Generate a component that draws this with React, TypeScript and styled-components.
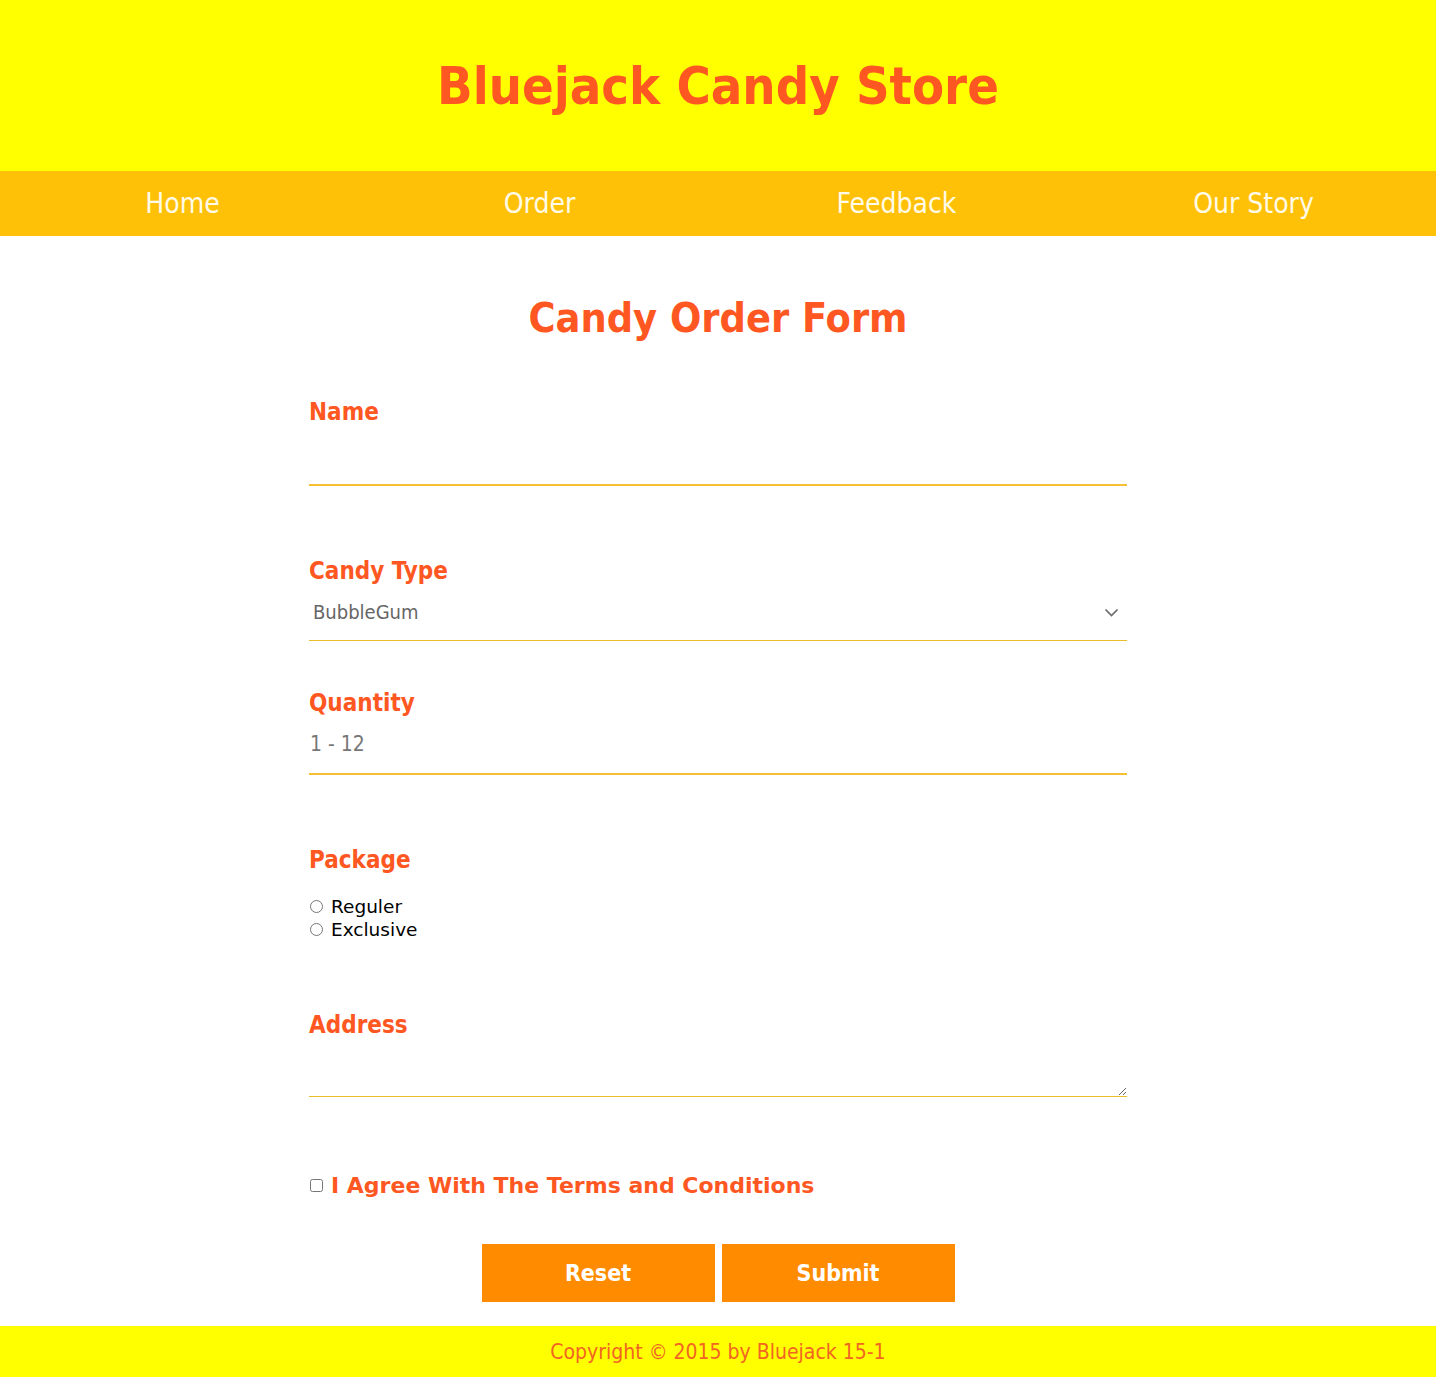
import React from "react";
import styled, { createGlobalStyle } from "styled-components";

const GlobalStyle = createGlobalStyle`
  body {
    margin: 0;
    background: #ffffff;
    font-family: "DejaVu Sans Condensed", "DejaVu Sans", sans-serif;
  }
`;

const tahoma = `"DejaVu Sans Condensed", "DejaVu Sans", sans-serif`;
const verdana = `"DejaVu Sans", Verdana, sans-serif`;
const orangeRed = "#ff5722";
const amber = "#ffc107";
const line = "#f5c133";
const thinLine = "#e9bf2a";

const Header = styled.header`
  height: 171px;
  background: #ffff00;
  display: flex;
  align-items: center;
  justify-content: center;
`;

const StoreTitle = styled.h1`
  margin: 0;
  font-family: ${tahoma};
  font-stretch: condensed;
  font-size: 52px;
  font-weight: bold;
  color: ${orangeRed};
`;

const Nav = styled.nav`
  height: 65px;
  padding: 0 4px;
  background: ${amber};
  display: grid;
  grid-template-columns: repeat(4, 1fr);
  align-items: center;
`;

const NavLink = styled.a`
  text-align: center;
  font-family: ${tahoma};
  font-stretch: condensed;
  font-size: 28px;
  color: #fffbe8;
  text-decoration: none;
  cursor: pointer;
`;

const Main = styled.main`
  padding-top: 57px;
`;

const FormTitle = styled.h2`
  margin: 0;
  text-align: center;
  font-family: ${tahoma};
  font-stretch: condensed;
  font-size: 41px;
  line-height: 50px;
  font-weight: bold;
  color: ${orangeRed};
`;

const Form = styled.form`
  width: 818px;
  margin: 0 auto;
  display: flex;
  flex-direction: column;
`;

const Field = styled.div<{ $gap: number }>`
  margin-top: ${(p) => p.$gap}px;
  display: flex;
  flex-direction: column;
`;

const Label = styled.label`
  font-family: ${tahoma};
  font-stretch: condensed;
  font-size: 24px;
  line-height: 26px;
  font-weight: bold;
  color: ${orangeRed};
`;

const TextInput = styled.input<{ $top: number }>`
  box-sizing: border-box;
  width: 100%;
  height: 47px;
  margin-top: ${(p) => p.$top}px;
  padding: 0 0 14px 1px;
  border: none;
  border-bottom: 2px solid ${line};
  outline: none;
  font-family: ${tahoma};
  font-stretch: condensed;
  font-size: 21px;
  color: #333;
  background: transparent;
  &::placeholder {
    color: #777;
  }
`;

const SelectWrap = styled.div`
  position: relative;
  margin-top: 4px;
  border-bottom: 1px solid ${thinLine};
`;

const Select = styled.select`
  display: block;
  box-sizing: border-box;
  width: 100%;
  height: 52px;
  padding: 0 30px 4px 4px;
  appearance: none;
  border: 0;
  border-radius: 0;
  outline: none;
  font-family: ${tahoma};
  font-stretch: condensed;
  font-size: 20px;
  color: #666;
  background: #ffffff;
`;

const Chevron = styled.svg`
  position: absolute;
  right: 8px;
  top: 20px;
  width: 15px;
  height: 9px;
  pointer-events: none;
`;

const RadioGroup = styled.div`
  margin-top: 22px;
  display: flex;
  flex-direction: column;
`;

const RadioRow = styled.label`
  display: flex;
  align-items: center;
  height: 23px;
  font-family: ${verdana};
  font-size: 18.5px;
  color: #000;
  input {
    margin: 0 8px 0 1px;
    width: 13px;
    height: 13px;
  }
`;

const TextArea = styled.textarea`
  box-sizing: border-box;
  width: 100%;
  height: 51px;
  margin-top: 8px;
  border: none;
  border-bottom: 1px solid ${thinLine};
  outline: none;
  font-family: ${tahoma};
  font-size: 19px;
`;

const AgreeRow = styled.label`
  margin-top: 75px;
  display: flex;
  align-items: center;
  height: 26px;
  font-family: ${verdana};
  font-size: 22px;
  font-weight: bold;
  color: ${orangeRed};
  input {
    margin: 0 8px 0 1px;
    width: 13px;
    height: 13px;
  }
`;

const Buttons = styled.div`
  margin-top: 46px;
  display: flex;
  justify-content: center;
  gap: 7px;
`;

const Button = styled.button`
  width: 233px;
  height: 58px;
  border: none;
  background: #ff8c00;
  color: #ffffff;
  font-family: ${tahoma};
  font-stretch: condensed;
  font-size: 23px;
  font-weight: bold;
  cursor: pointer;
`;

const Footer = styled.footer`
  margin: 24px 0 5px;
  height: 51px;
  background: #ffff00;
  display: flex;
  align-items: center;
  justify-content: center;
  font-family: ${tahoma};
  font-stretch: condensed;
  font-size: 21px;
  color: #f26522;
`;

const navItems = ["Home", "Order", "Feedback", "Our Story"];

export default function App() {
  return (
    <>
      <GlobalStyle />
      <Header>
        <StoreTitle>Bluejack Candy Store</StoreTitle>
      </Header>
      <Nav>
        {navItems.map((n) => (
          <NavLink key={n}>{n}</NavLink>
        ))}
      </Nav>
      <Main>
        <FormTitle>Candy Order Form</FormTitle>
        <Form onSubmit={(e) => e.preventDefault()}>
          <Field $gap={56}>
            <Label htmlFor="name">Name</Label>
            <TextInput id="name" type="text" $top={14} />
          </Field>
          <Field $gap={72}>
            <Label htmlFor="type">Candy Type</Label>
            <SelectWrap>
              <Select id="type" defaultValue="BubbleGum">
                <option>BubbleGum</option>
                <option>Lollipop</option>
                <option>Chocolate</option>
              </Select>
              <Chevron viewBox="0 0 15 9" fill="none">
                <path d="M1.5 1.5 L7.5 7.5 L13.5 1.5" stroke="#6b6b6b" strokeWidth="1.7" />
              </Chevron>
            </SelectWrap>
          </Field>
          <Field $gap={49}>
            <Label htmlFor="qty">Quantity</Label>
            <TextInput id="qty" type="number" placeholder="1 - 12" $top={12} />
          </Field>
          <Field $gap={72}>
            <Label>Package</Label>
            <RadioGroup>
              <RadioRow>
                <input type="radio" name="package" />
                Reguler
              </RadioRow>
              <RadioRow>
                <input type="radio" name="package" />
                Exclusive
              </RadioRow>
            </RadioGroup>
          </Field>
          <Field $gap={71}>
            <Label htmlFor="address">Address</Label>
            <TextArea id="address" />
          </Field>
          <AgreeRow>
            <input type="checkbox" />I Agree With The Terms and Conditions
          </AgreeRow>
          <Buttons>
            <Button type="reset">Reset</Button>
            <Button type="submit">Submit</Button>
          </Buttons>
        </Form>
      </Main>
      <Footer>Copyright © 2015 by Bluejack 15-1</Footer>
    </>
  );
}
